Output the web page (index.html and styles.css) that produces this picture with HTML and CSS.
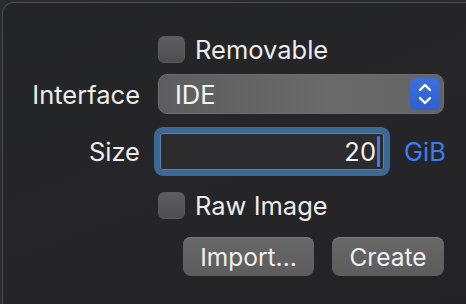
FILE: index.html
```html
<!DOCTYPE html>
<html lang="en">
<head>
    <meta charset="UTF-8">
    <title>New Disk</title>
    <link rel="stylesheet" href="styles.css">
</head>
<body>

<div class="window">
    <div class="row row-removable">
        <div class="label"></div>
        <label class="check">
            <span class="box"></span>
            <span class="check-text">Removable</span>
        </label>
    </div>

    <div class="row row-interface">
        <div class="label">Interface</div>
        <div class="popup">
            <span class="popup-value">IDE</span>
            <span class="stepper">
                <svg width="30" height="32" viewBox="0 0 30 32">
                    <path d="M10 12 L15 7 L20 12" fill="none" stroke="#fff" stroke-width="2.4" stroke-linecap="round" stroke-linejoin="round"/>
                    <path d="M10 20 L15 25 L20 20" fill="none" stroke="#fff" stroke-width="2.4" stroke-linecap="round" stroke-linejoin="round"/>
                </svg>
            </span>
        </div>
    </div>

    <div class="row row-size">
        <div class="label">Size</div>
        <div class="field">
            <span class="field-value">20</span><span class="caret"></span>
        </div>
        <span class="unit">GiB</span>
    </div>

    <div class="row row-raw">
        <div class="label"></div>
        <label class="check">
            <span class="box"></span>
            <span class="check-text">Raw Image</span>
        </label>
    </div>

    <div class="row row-buttons">
        <button class="button btn-import">Import...</button>
        <button class="button btn-create">Create</button>
    </div>
</div>

</body>
</html>
```

FILE: styles.css
```css
html, body {
    height: 100%;
}
body {
    margin: 0;
    background-color: #2b2b2c;
    font-family: Inter, "Noto Sans", sans-serif;
    color: #ececec;
    overflow: hidden;
}
.window {
    margin: 2px 0 0 2px;
    height: calc(100% - 2px);
    box-sizing: border-box;
    background: linear-gradient(160deg, #232426 0%, #262628 50%, #232325 100%);
    border-top: 1px solid #505052;
    border-left: 1px solid #4a4a4c;
    border-top-left-radius: 12px;
}
.row {
    display: flex;
    align-items: center;
    gap: 18px;
}
.label {
    width: 137px;
    text-align: right;
    font-size: 25.5px;
    flex-shrink: 0;
}
.row-removable {
    margin-top: 33px;
    height: 27px;
}
.row-interface {
    margin-top: 11px;
    height: 40px;
}
.row-size {
    margin-top: 13px;
    height: 49px;
}
.row-raw {
    margin-top: 16px;
    height: 27px;
}
.row-buttons {
    margin-top: 18px;
    height: 39px;
    padding-left: 180px;
    gap: 18px;
}
.check {
    display: flex;
    align-items: center;
    gap: 10px;
}
.box {
    width: 27px;
    height: 27px;
    box-sizing: border-box;
    border-radius: 6px;
    background: linear-gradient(#5e5e60, #4e4e50);
    border: 1px solid #5a5a5c;
}
.check-text {
    font-size: 25.5px;
}
.popup {
    width: 286px;
    height: 40px;
    box-sizing: border-box;
    border-radius: 9px;
    background: linear-gradient(90deg, #5d5d5f, #6a6a6a 60%, #636364);
    border: 1px solid #6e6e70;
    display: flex;
    align-items: center;
    justify-content: space-between;
    padding: 0 3px 0 16px;
}
.popup-value {
    font-size: 25.5px;
    color: #f4f4f4;
}
.stepper {
    width: 30px;
    height: 32px;
    border-radius: 6px;
    background: linear-gradient(#3a70de, #2f60cc);
    display: flex;
}
.field {
    margin-left: -4px;
    width: 236px;
    height: 49px;
    box-sizing: border-box;
    border: 6px solid #3c6896;
    border-radius: 9px;
    background-color: #2c2c2e;
    box-shadow: inset 0 0 0 1px #5f82a8;
    display: flex;
    align-items: center;
    justify-content: flex-end;
    padding-right: 4px;
}
.field-value {
    font-size: 25.5px;
    color: #f0f0f0;
}
.caret {
    width: 3px;
    height: 31px;
    margin-left: 1px;
    background-color: #3c7cf0;
    border-radius: 1px;
}
.unit {
    margin-left: -4px;
    font-size: 25.5px;
    color: #3b7df0;
}
.button {
    height: 39px;
    box-sizing: border-box;
    border: none;
    border-radius: 8px;
    background: linear-gradient(#686868, #5c5c5c);
    box-shadow: inset 0 1px 0 #7a7a7a;
    color: #f0f0f0;
    font-family: Inter, "Noto Sans", sans-serif;
    font-size: 24.5px;
    padding: 0;
}
.btn-import {
    width: 131px;
}
.btn-create {
    width: 112px;
}
```
